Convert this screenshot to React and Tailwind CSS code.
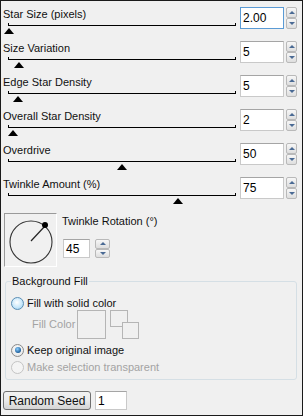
import React from 'react';

const sliders = [
  { label: 'Star Size (pixels)', value: '2.00', thumb: 9, focused: true },
  { label: 'Size Variation', value: '5', thumb: 19 },
  { label: 'Edge Star Density', value: '5', thumb: 18 },
  { label: 'Overall Star Density', value: '2', thumb: 13 },
  { label: 'Overdrive', value: '50', thumb: 122 },
  { label: 'Twinkle Amount (%)', value: '75', thumb: 178 },
];

const SpinButton = ({ up, w, h }) => (
  <div
    className={`${w} ${h} flex items-center justify-center rounded-[2px] border border-[#b9b9b9] bg-linear-to-b from-[#f7f7f7] to-[#dedede]`}
  >
    {up ? (
      <div className="border-x-[3px] border-x-transparent border-b-[3px] border-b-[#4a6a94]" />
    ) : (
      <div className="border-x-[3px] border-x-transparent border-t-[3px] border-t-[#4a6a94]" />
    )}
  </div>
);

const Spinner = ({ w = 'w-[11px]', h = 'h-[11px]' }) => (
  <div className="flex flex-col">
    <SpinButton up w={w} h={h} />
    <SpinButton w={w} h={h} />
  </div>
);

const Field = ({ value, focused, className }) => (
  <div
    className={`${className} flex items-center bg-white pl-[2px] text-[12px] text-black border ${
      focused ? 'border-[#5b9bd5]' : 'border-[#c9c9c9] border-t-[#a5a5a5]'
    }`}
  >
    {value}
  </div>
);

const Radio = ({ state }) => {
  if (state === 'checked')
    return (
      <div className="w-[13px] h-[13px] rounded-full border border-[#8a8a8a] bg-[radial-gradient(circle_at_50%_40%,#ffffff,#e2e2e2)] flex items-center justify-center">
        <div className="w-[6px] h-[6px] rounded-full bg-[radial-gradient(circle_at_40%_35%,#8fd0ff,#1d5f9c_70%,#123f6e)]" />
      </div>
    );
  if (state === 'disabled')
    return <div className="w-[13px] h-[13px] rounded-full border border-[#c4c4c4] bg-[#f4f4f4]" />;
  return (
    <div className="w-[13px] h-[13px] rounded-full border border-[#5a8eb5] bg-[radial-gradient(circle_at_45%_40%,#ffffff,#c9e8fb_55%,#8fc7ec)]" />
  );
};

const SliderRow = ({ label, value, thumb, focused }) => (
  <div className="flex h-[34px]">
    <div className="w-[237px]">
      <div className="h-[14px] leading-[14px]">{label}</div>
      <div className="relative ml-[5px] w-[228px] h-[12px]">
        <div className="absolute left-0 top-[2px] w-px h-[3px] bg-black" />
        <div className="absolute right-0 top-[2px] w-px h-[3px] bg-black" />
        <div className="absolute left-0 right-0 top-[4px] h-px bg-black" />
        <div
          className="absolute top-[7px] w-0 h-0 border-x-[5px] border-x-transparent border-b-[6px] border-b-black"
          style={{ left: thumb - 8 - 5 }}
        />
      </div>
    </div>
    <div className="flex gap-[2px]">
      <Field value={value} focused={focused} className="w-[44px] h-[22px]" />
      <Spinner />
    </div>
  </div>
);

export default function App() {
  return (
    <div
      className="w-[303px] h-[416px] border border-[#1a1a1a] bg-[#f0f0f0] text-[11px] text-[#111] overflow-hidden"
      style={{ fontFamily: '"Liberation Sans", Arial, sans-serif' }}
    >
      <div className="pt-[6px] pl-[2px]">
        {sliders.map((s) => (
          <SliderRow key={s.label} {...s} />
        ))}

        <div className="flex mt-[2px]">
          <div className="ml-[1px] w-[53px] h-[54px] border border-t-[#9a9a9a] border-l-[#9a9a9a] border-r-white border-b-white bg-[#f0f0f0]">
            <svg width="51" height="52" viewBox="0 0 51 52">
              <circle cx="26" cy="28" r="21" fill="none" stroke="#333" strokeWidth="1.1" />
              <line x1="26" y1="27" x2="40" y2="12" stroke="#222" strokeWidth="1.2" />
              <circle cx="40" cy="11" r="3" fill="#000" />
            </svg>
          </div>
          <div className="ml-[5px] pt-[1px]">
            <div className="h-[14px] leading-[14px]">Twinkle Rotation (°)</div>
            <div className="flex mt-[11px] ml-[1px] gap-[5px]">
              <Field value="45" className="w-[27px] h-[19px]" />
              <Spinner w="w-[15px]" h="h-[9.5px]" />
            </div>
          </div>
        </div>

        <fieldset className="mt-[7px] ml-[2px] w-[292px] border border-[#d5dfe5] rounded-[3px] pb-[5px]">
          <legend className="ml-[5px] px-[1px] h-[14px] leading-[14px]">Background Fill</legend>
          <div className="mt-[8px] pl-[5px] flex items-center h-[14px] gap-[3px]">
            <Radio state="hover" />
            <span>Fill with solid color</span>
          </div>
          <div className="flex items-center h-[29px] pl-[26px]">
            <span className="text-[#a3a3a3] w-[45px]">Fill Color</span>
            <div className="w-[29px] h-[29px] border border-[#b5b5b5]" />
            <div className="relative ml-[4px] w-[30px] h-[29px]">
              <div className="absolute left-0 top-0 w-[18px] h-[17px] border border-[#b5b5b5]" />
              <div className="absolute left-[12px] top-[12px] w-[17px] h-[17px] border border-[#b5b5b5] bg-[#f0f0f0]" />
            </div>
          </div>
          <div className="mt-[4px] pl-[5px] flex items-center h-[14px] gap-[3px]">
            <Radio state="checked" />
            <span>Keep original image</span>
          </div>
          <div className="mt-[3px] pl-[5px] flex items-center h-[14px] gap-[3px]">
            <Radio state="disabled" />
            <span className="text-[#a3a3a3]">Make selection transparent</span>
          </div>
        </fieldset>

        <div className="flex mt-[11px] gap-[4px]">
          <button className="w-[88px] h-[19px] rounded-[3px] border border-[#707070] bg-linear-to-b from-[#f2f2f2] via-[#ebebeb] to-[#d4d4d4] text-[12px] leading-none text-[#111]">
            Random Seed
          </button>
          <Field value="1" className="w-[32px] h-[19px]" />
        </div>
      </div>
    </div>
  );
}
